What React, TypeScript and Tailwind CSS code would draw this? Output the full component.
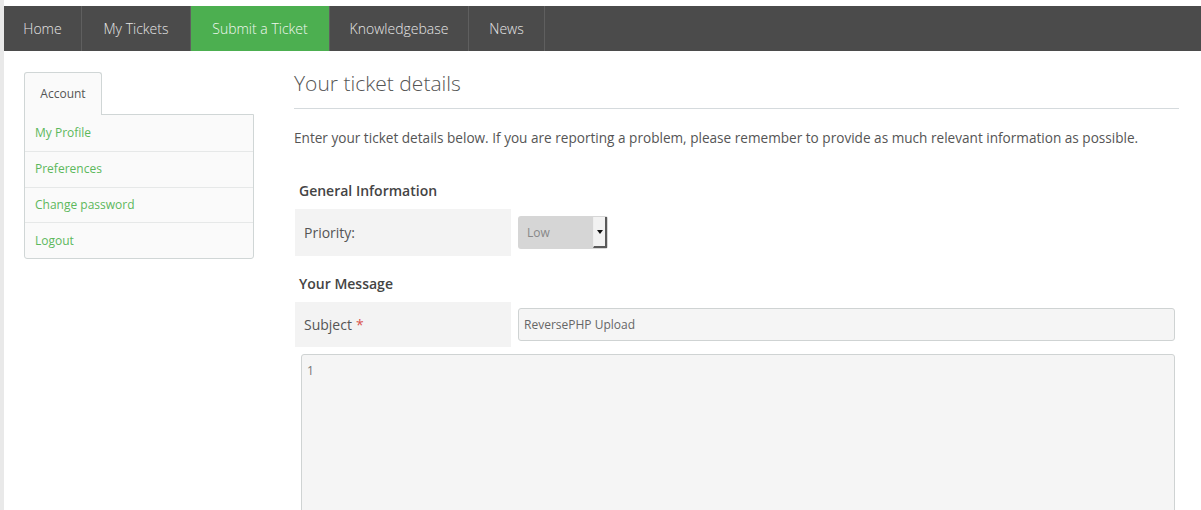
import React from 'react';

const navItems = [
  { label: 'Home', width: 'w-[78px]', active: false },
  { label: 'My Tickets', width: 'w-[109px]', active: false },
  { label: 'Submit a Ticket', width: 'w-[139px]', active: true },
  { label: 'Knowledgebase', width: 'w-[139px]', active: false },
  { label: 'News', width: 'w-[76px]', active: false },
];

const accountLinks = ['My Profile', 'Preferences', 'Change password', 'Logout'];

const font = "font-['Open_Sans',_'Liberation_Sans',_sans-serif]";

const App = () => {
  return (
    <div className={`min-h-screen bg-[#e9e9e9] pl-1 ${font}`}>
      <div className="min-h-screen bg-white pt-[6px]">
        {/* top navigation */}
        <nav className="flex h-[45px] bg-[#4b4b4b]">
          {navItems.map((item) => (
            <a
              key={item.label}
              className={`flex items-center justify-center border-r border-[#5f5f5f] text-[14px] font-light ${item.width} ${
                item.active ? 'bg-[#4caf50] text-[#f1f7f1]' : 'text-[#e6e6e6]'
              }`}
            >
              {item.label}
            </a>
          ))}
        </nav>

        <div className="flex gap-10 px-5">
          {/* sidebar */}
          <aside className="w-[230px] shrink-0 pt-[21px]">
            <div className="relative z-10 -mb-px flex h-[43px] w-[78px] items-center justify-center rounded-t-[3px] border border-b-0 border-[#d0d6d6] bg-[#fafafa] text-[12px] text-[#555]">
              Account
            </div>
            <ul className="rounded-b-[3px] border border-[#d0d6d6] bg-[#fafafa]">
              {accountLinks.map((link, i) => (
                <li
                  key={link}
                  className={`flex h-[35.75px] items-center px-[10px] text-[12px] text-[#5cb85c] ${
                    i > 0 ? 'border-t border-[#e6e8e8]' : ''
                  }`}
                >
                  {link}
                </li>
              ))}
            </ul>
          </aside>

          {/* main content */}
          <main className="flex-1 pr-[2px] text-[#555]">
            <div className="border-b border-[#d5dadd] pb-[10px] pt-[17px]">
              <h1 className="text-[21px] font-light leading-[30px] text-[#555]">Your ticket details</h1>
            </div>
            <p className="mt-[19px] text-[13.6px] leading-5">
              Enter your ticket details below. If you are reporting a problem, please remember to provide as much relevant
              information as possible.
            </p>

            <h2 className="ml-[5px] mt-[33px] text-[14px] font-semibold leading-5 text-[#444]">General Information</h2>
            <div className="ml-px mt-2 flex h-[47px] items-center gap-[7px] pr-1">
              <div className="flex h-full w-[216px] items-center bg-[#f3f3f3] pb-px pl-[9px] text-[14px]">Priority:</div>
              <div className="flex h-[33px] w-[90px] items-stretch rounded-[3px] bg-[#d6d6d6]">
                <span className="flex flex-1 items-center pl-[9px] text-[12px] text-[#888]">Low</span>
                <span className="my-px mr-px flex w-[14px] items-center justify-center border-b-2 border-r-2 border-l border-[#5a5a5a] border-l-[#eee] bg-[#f2f2f2]">
                  <svg width="6" height="4" viewBox="0 0 6 4">
                    <path d="M0 0h6L3 4z" fill="#111" />
                  </svg>
                </span>
              </div>
            </div>

            <h2 className="ml-[5px] mt-[18px] text-[14px] font-semibold leading-5 text-[#444]">Your Message</h2>
            <div className="ml-px mt-2 flex h-[45px] items-center gap-[7px] pr-1">
              <div className="flex h-full w-[216px] shrink-0 items-center bg-[#f3f3f3] pl-[9px] text-[14px]">
                Subject<span className="ml-1 text-[#d9534f]">*</span>
              </div>
              <input
                readOnly
                value="ReversePHP Upload"
                className="h-[33px] flex-1 rounded-[3px] border border-[#cfd3d3] bg-[#f5f5f5] pl-[5px] text-[12px] text-[#666] outline-none"
              />
            </div>
            <div className="ml-[7px] mr-1 mt-[7px]">
              <textarea
                readOnly
                value="1"
                className="block h-[220px] w-full resize-none rounded-[3px] border border-[#cfd3d3] bg-[#f5f5f5] px-[5px] py-[7px] text-[12px] text-[#777] outline-none"
              />
            </div>
          </main>
        </div>
      </div>
    </div>
  );
};

export default App;
